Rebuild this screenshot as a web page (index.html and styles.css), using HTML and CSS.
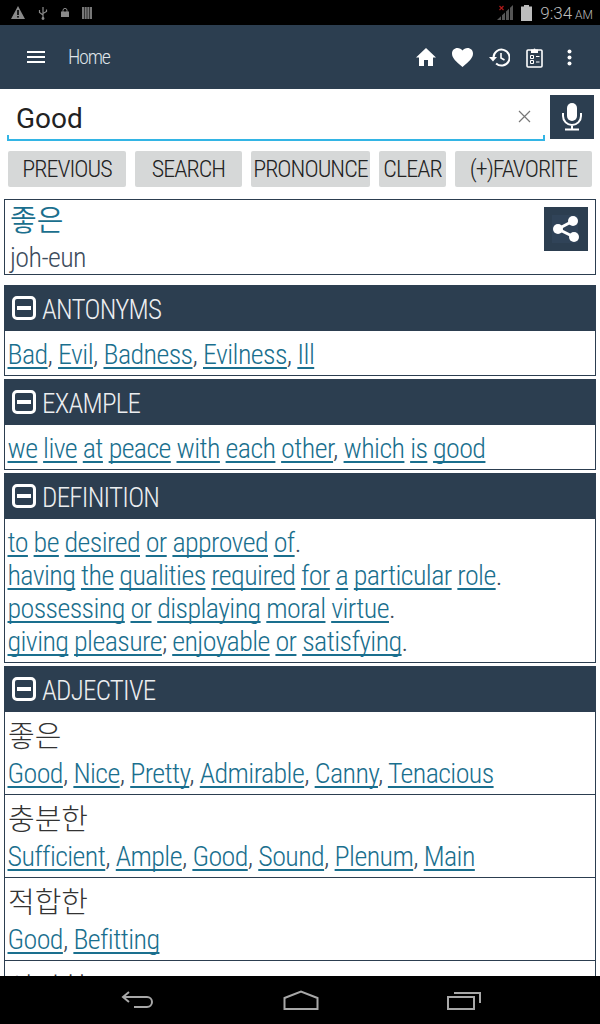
FILE: index.html
```html
<!DOCTYPE html>
<html lang="en">
<head>
<meta charset="utf-8">
<title>Dictionary</title>
<link rel="stylesheet" href="styles.css">
</head>
<body>
<div class="screen">
  <div class="status">
    <div class="status-left">
      <svg class="si" width="14" height="13" viewBox="0 0 14 13"><path fill="#8a8a8a" d="M7 0l7 13H0z"/><rect x="6.200" y="4" width="1.600" height="5" fill="#000"/><rect x="6.200" y="10" width="1.600" height="1.600" fill="#000"/></svg>
      <svg class="si" width="10" height="14" viewBox="0 0 10 14"><path fill="none" stroke="#8a8a8a" stroke-width="1.200" d="M5 1v12M1.500 4v2.500L5 9M8.500 3.500v2L5 7.500"/><circle cx="5" cy="12.500" r="1.400" fill="#8a8a8a"/></svg>
      <svg class="si" width="8" height="9" viewBox="0 0 8 9"><rect y="3.500" width="8" height="5.500" fill="#8a8a8a"/><path d="M2 4V2.400a2 2 0 0 1 4 0V4" fill="none" stroke="#8a8a8a"/></svg>
      <svg class="si" width="10" height="12" viewBox="0 0 10 12"><rect width="10" height="12" fill="#777"/><path stroke="#333" d="M2.500 0v12M5 0v12M7.500 0v12"/></svg>
    </div>
    <div class="status-right">
      <svg width="16" height="15" viewBox="0 0 16 15"><path fill="#555" d="M0 15l16-15v15z"/><path stroke="#000" d="M4.500 0v15M8.500 0v15M12.500 0v15"/><path stroke="#b01818" stroke-width="1.200" d="M1.500 1l4 4M5.500 1l-4 4" transform="translate(1 0)"/></svg>
      <svg class="batt" width="11" height="16" viewBox="0 0 11 16"><path fill="#bdbdbd" d="M3 0h5v1.500h3V16H0V1.500h3z"/></svg>
      <span class="clock">9:34<span class="ampm"> AM</span></span>
    </div>
  </div>

  <header class="appbar">
    <svg class="burger" width="18" height="12" viewBox="0 0 18 12"><path fill="#fff" d="M0 0h18v2H0zM0 5h18v2H0zM0 10h18v2H0z"/></svg>
    <span class="apptitle">Home</span>
    <div class="appicons">
      <svg width="20" height="18" viewBox="0 0 20 18"><path fill="#fff" d="M10 0L0 9.500h3V18h5v-6h4v6h5V9.500h3z"/></svg>
      <svg width="21" height="19" viewBox="0 0 21 19"><path fill="#fff" d="M10.500 19C4 13.500 0 10 0 5.500 0 2.300 2.400 0 5.500 0c2 0 3.900 1 5 2.600C11.600 1 13.500 0 15.500 0 18.600 0 21 2.300 21 5.500c0 4.500-4 8-10.500 13.500z"/></svg>
      <svg width="21" height="19" viewBox="0 0 21 19"><path fill="none" stroke="#fff" stroke-width="2" d="M4.500 9.500a8 8 0 1 1 2.600 6"/><path fill="#fff" d="M0 9h8l-4 4.500z"/><path fill="none" stroke="#fff" stroke-width="1.600" d="M12 5v5l3.500 2"/></svg>
      <svg width="17" height="21" viewBox="0 0 17 21"><rect x="1" y="3" width="15" height="17" rx="1" fill="none" stroke="#fff" stroke-width="1.600"/><path fill="#fff" d="M5 2.500h2.500a1 1 0 0 1 2 0H12V6H5z"/><path fill="none" stroke="#fff" d="M4.500 8.500h3v3h-3zM10 9.500h3.500M4.500 13.500h3v3h-3zM10 15h3.500"/></svg>
      <svg class="dots" width="5" height="17" viewBox="0 0 5 17"><circle cx="2.500" cy="2.500" r="2" fill="#fff"/><circle cx="2.500" cy="8.500" r="2" fill="#fff"/><circle cx="2.500" cy="14.500" r="2" fill="#fff"/></svg>
    </div>
  </header>

  <div class="searchrow">
    <div class="field">
      <span class="query">Good</span>
      <svg class="clear" width="13" height="13" viewBox="0 0 13 13"><path stroke="#777" stroke-width="1.200" d="M1 1l11 11M12 1L1 12"/></svg>
    </div>
    <div class="mic">
      <svg width="20" height="28" viewBox="0 0 20 28"><rect x="5" y="0" width="10" height="18" rx="5" fill="#fff"/><path fill="none" stroke="#fff" stroke-width="2" d="M1 10v3a9 9 0 0 0 18 0v-3M10 22v4M3 26.500h14"/></svg>
    </div>
  </div>

  <div class="buttons">
    <span class="btn b1">PREVIOUS</span>
    <span class="btn b2">SEARCH</span>
    <span class="btn b3">PRONOUNCE</span>
    <span class="btn b4">CLEAR</span>
    <span class="btn b5">(+)FAVORITE</span>
  </div>

  <div class="result">
    <div>
      <div class="ko-link">좋은</div>
      <div class="roman">joh-eun</div>
    </div>
    <div class="share">
      <svg width="44" height="44" viewBox="0 0 44 44"><rect x="8" y="8" width="26" height="28" fill="#304358"/><path fill="none" stroke="#fff" stroke-width="3" d="M29 14L14 22l16 8"/><circle cx="29" cy="14" r="5" fill="#fff"/><circle cx="14" cy="22" r="5" fill="#fff"/><circle cx="30" cy="30" r="5" fill="#fff"/></svg>
    </div>
  </div>

  <section class="sec first">
    <h2 class="sec-head"><span class="minus"></span><span class="sec-title">ANTONYMS</span></h2>
    <div class="sec-body"><p class="line"><a>Bad</a>, <a>Evil</a>, <a>Badness</a>, <a>Evilness</a>, <a>Ill</a></p></div>
  </section>

  <section class="sec">
    <h2 class="sec-head"><span class="minus"></span><span class="sec-title">EXAMPLE</span></h2>
    <div class="sec-body"><p class="line"><a>we</a> <a>live</a> <a>at</a> <a>peace</a> <a>with</a> <a>each</a> <a>other</a>, <a>which</a> <a>is</a> <a>good</a></p></div>
  </section>

  <section class="sec">
    <h2 class="sec-head"><span class="minus"></span><span class="sec-title">DEFINITION</span></h2>
    <div class="sec-body">
      <p class="line"><a>to</a> <a>be</a> <a>desired</a> <a>or</a> <a>approved</a> <a>of</a>.</p>
      <p class="line"><a>having</a> <a>the</a> <a>qualities</a> <a>required</a> <a>for</a> <a>a</a> <a>particular</a> <a>role</a>.</p>
      <p class="line"><a>possessing</a> <a>or</a> <a>displaying</a> <a>moral</a> <a>virtue</a>.</p>
      <p class="line"><a>giving</a> <a>pleasure</a>; <a>enjoyable</a> <a>or</a> <a>satisfying</a>.</p>
    </div>
  </section>

  <section class="sec">
    <h2 class="sec-head"><span class="minus"></span><span class="sec-title">ADJECTIVE</span></h2>
    <div class="entry"><div class="ko">좋은</div><p class="line"><a>Good</a>, <a>Nice</a>, <a>Pretty</a>, <a>Admirable</a>, <a>Canny</a>, <a>Tenacious</a></p></div>
    <div class="entry"><div class="ko">충분한</div><p class="line"><a>Sufficient</a>, <a>Ample</a>, <a>Good</a>, <a>Sound</a>, <a>Plenum</a>, <a>Main</a></p></div>
    <div class="entry"><div class="ko">적합한</div><p class="line"><a>Good</a>, <a>Befitting</a></p></div>
    <div class="entry last"><div class="ko">상당한</div></div>
  </section>

  <nav class="navbar">
    <svg width="34" height="18" viewBox="0 0 34 18"><path fill="none" stroke="#a8a8a8" stroke-width="2" d="M8 1L2 6l6 5M2 6h24a5 5 0 0 1 0 10H13"/></svg>
    <svg width="36" height="20" viewBox="0 0 36 20"><path fill="none" stroke="#a8a8a8" stroke-width="2" d="M1.500 19V8L18 1.500 34.500 8V19z"/></svg>
    <svg width="34" height="20" viewBox="0 0 34 20"><path fill="none" stroke="#a8a8a8" stroke-width="2" d="M1 7h26v12H1zM7 3h26v10"/></svg>
  </nav>
</div>
</body>
</html>
```
FILE: styles.css
```css
* { box-sizing: border-box; }
html, body { margin: 0; padding: 0; }
body { width: 600px; height: 1024px; overflow: hidden; background: #fff; font-family: "Roboto", "Noto Sans CJK KR", sans-serif; }
.screen { width: 600px; height: 1024px; display: flex; flex-direction: column; position: relative; overflow: hidden; }

.status { height: 25px; flex: none; background: #000; display: flex; justify-content: space-between; align-items: center; padding: 0 7px 0 11px; }
.status-left { display: flex; align-items: center; gap: 13px; }
.status-right { display: flex; align-items: center; gap: 8px; }
.clock { font-size: 17px; color: #bdbdbd; font-weight: 300; }
.ampm { font-size: 12px; }

.appbar { height: 64px; flex: none; background: #2c3e50; display: flex; align-items: center; padding: 0 28px 0 27px; }
.apptitle { margin-left: 23px; color: #dfe3e8; font-size: 20px; font-weight: 300; font-stretch: condensed; letter-spacing: -1.2px; }
.appicons { margin-left: auto; display: flex; align-items: center; gap: 16px; }
.dots { margin-left: 8px; }

.searchrow { height: 58px; flex: none; display: flex; padding: 6px 6px 0 7px; gap: 5px; }
.field { width: 538px; height: 46px; flex: none; display: flex; align-items: center; justify-content: space-between; padding: 2px 14px 0 9px; border-bottom: 2px solid #33b5e5; position: relative; }
.field::before, .field::after { content: ""; position: absolute; bottom: 0; width: 2px; height: 4px; background: #33b5e5; }
.field::before { left: 0; }
.field::after { right: 0; }
.query { font-size: 28px; color: #222; }
.clear { margin-top: -4px; }
.mic { width: 44px; height: 44px; background: #2c3e50; display: flex; align-items: center; justify-content: center; }

.buttons { flex: none; display: flex; padding: 4px 8px 0; gap: 9px; height: 40px; }
.btn { height: 36px; background: #d6d8d8; border-radius: 2px; display: flex; align-items: center; justify-content: center; color: #222; font-size: 24px; font-weight: 300; font-stretch: condensed; letter-spacing: -0.95px; }
.b1 { width: 118px; } .b2 { width: 107px; } .b3 { width: 119px; } .b4 { width: 67px; } .b5 { width: 137px; }

.result { flex: none; margin: 12px 4px 0; height: 76px; border: 1px solid #2c3e50; padding: 0 7px 0 5px; display: flex; justify-content: space-between; }
.ko-link { font-size: 29px; color: #1a6f8e; line-height: 37px; font-weight: 350; padding-top: 3px; }
.roman { font-size: 28px; color: #3d4c5c; font-weight: 300; font-stretch: condensed; letter-spacing: -0.6px; line-height: 35px; }
.share { width: 44px; height: 44px; margin-top: 7px; background: #2c3e50; }

.sec { flex: none; margin: 3px 4px 0; border: 1px solid #2c3e50; border-top: 0; }
.sec.first { margin-top: 10px; }
.sec-head { margin: 0 -1px; height: 46px; background: #2c3e50; display: flex; align-items: center; padding-left: 8px; color: #eceef0; font-size: 27px; font-weight: 300; font-stretch: condensed; letter-spacing: -0.75px; }
.sec-title { padding-top: 3px; }
.minus { width: 24px; height: 24px; border: 3px solid #fff; border-radius: 5px; margin-right: 6px; position: relative; }
.minus::after { content: ""; position: absolute; left: 2px; right: 2px; top: 7px; height: 4px; background: #fff; }
.sec-body { padding: 7px 3px 4px; }
.line { margin: 0 0 0 -0.5px; font-size: 28px; line-height: 33px; color: #3d4c5c; font-weight: 300; font-stretch: condensed; letter-spacing: -0.6px; }
.line a { color: #1a6f8e; text-decoration: underline; text-decoration-thickness: 1.5px; text-decoration-skip-ink: none; text-underline-offset: 3px; }
.entry { padding: 5px 3px 4px; border-bottom: 1px solid #2c3e50; height: 83px; }
.entry.last { padding-top: 8px; }
.ko { font-size: 29px; line-height: 40px; color: #333; font-weight: 300; }

.navbar { position: absolute; left: 0; right: 0; bottom: 0; height: 48px; background: #000; display: flex; align-items: center; gap: 128px; padding: 0 0 0 121px; }
```
